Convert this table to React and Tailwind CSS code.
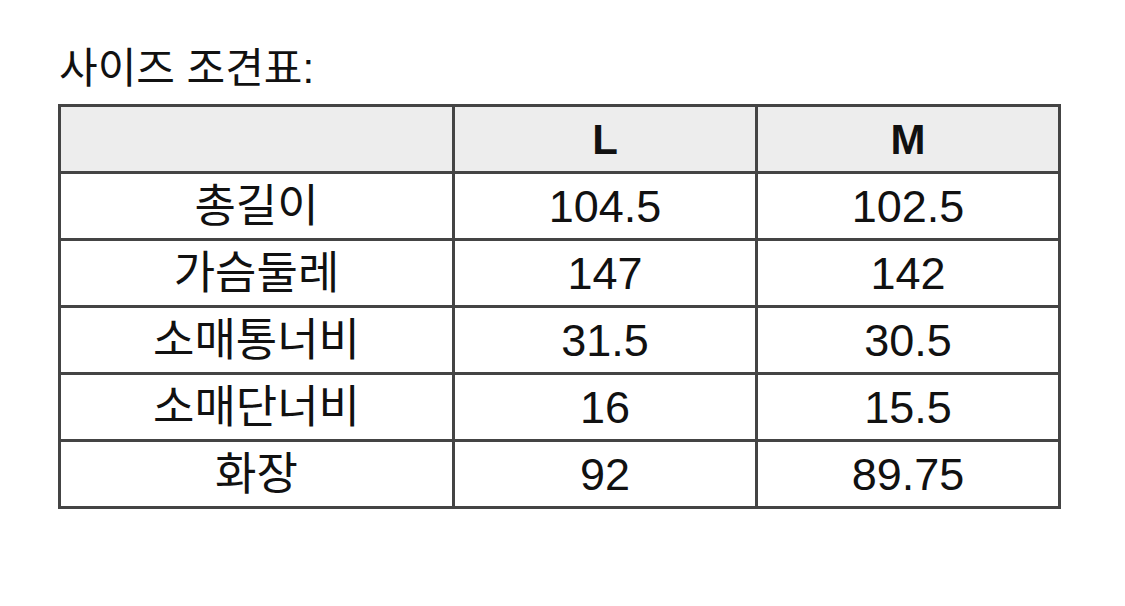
export default function App() {
  const rows = [
    ["총길이", "104.5", "102.5"],
    ["가슴둘레", "147", "142"],
    ["소매통너비", "31.5", "30.5"],
    ["소매단너비", "16", "15.5"],
    ["화장", "92", "89.75"],
  ];

  return (
    <div
      className="w-[1125px] h-[606px] bg-white pl-[58px] pt-[44px] text-[#111]"
      style={{ fontFamily: '"Liberation Sans", "Noto Sans CJK KR", sans-serif' }}
    >
      {/* 제목 */}
      <h1 className="text-[42px] leading-[50px] pl-[1px] mb-[10px]">사이즈 조견표:</h1>

      {/* 사이즈 표 */}
      <table className="table-fixed border-collapse w-[1002px] text-[45px] text-center">
        <colgroup>
          <col className="w-[394px]" />
          <col className="w-[303px]" />
          <col className="w-[303px]" />
        </colgroup>
        <thead>
          <tr className="h-[67px] bg-[#ededed]">
            <th className="border-[3px] border-[#444]"></th>
            <th className="border-[3px] border-[#444] font-bold text-[42px]">L</th>
            <th className="border-[3px] border-[#444] font-bold text-[42px]">M</th>
          </tr>
        </thead>
        <tbody>
          {rows.map((r) => (
            <tr key={r[0]} className="h-[67px]">
              {r.map((c, i) => (
                <td key={i} className="border-[3px] border-[#444] p-0 leading-none">
                  {c}
                </td>
              ))}
            </tr>
          ))}
        </tbody>
      </table>
    </div>
  );
}
